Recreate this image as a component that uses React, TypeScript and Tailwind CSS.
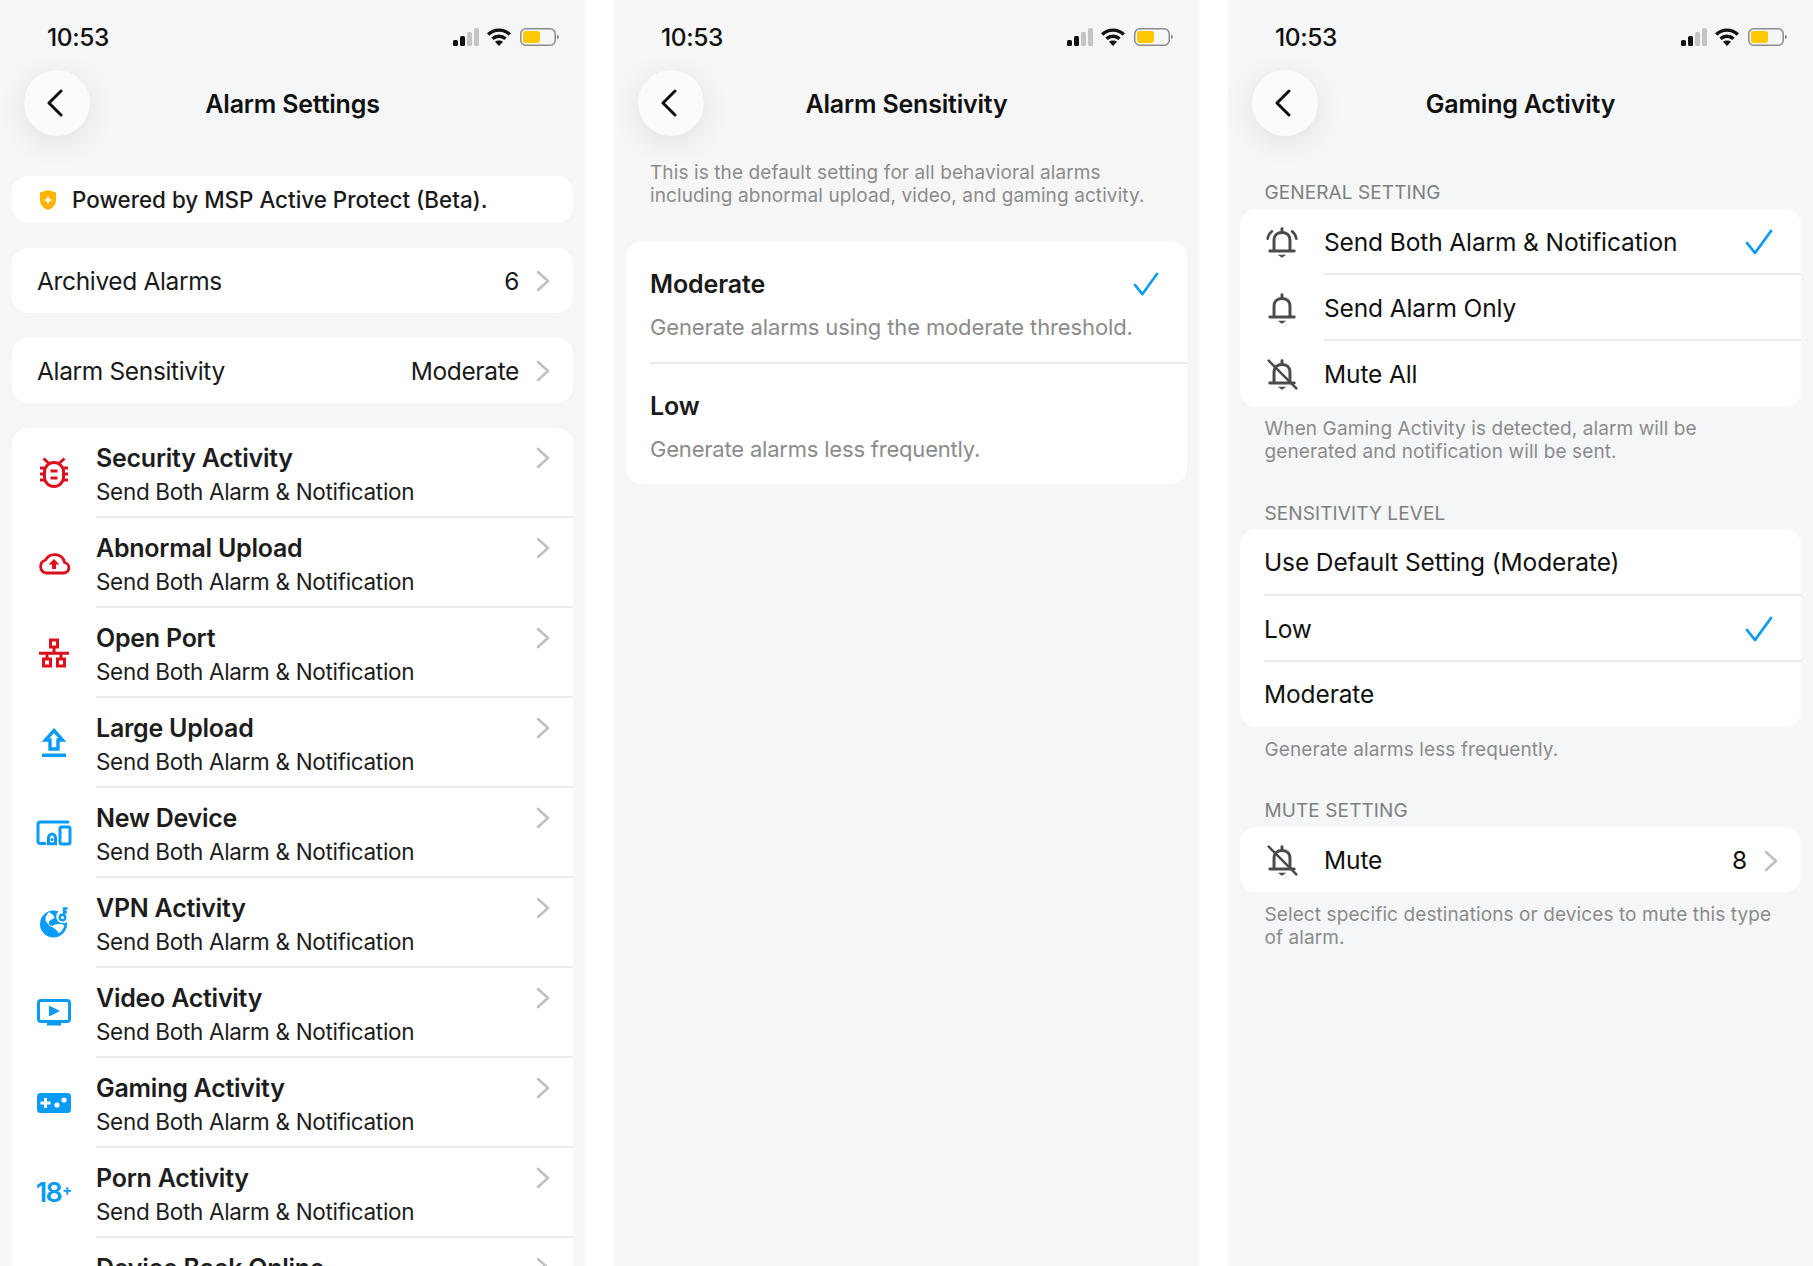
import React from "react";

const sub = "Send Both Alarm & Notification";

function Chevron({ className = "" }: { className?: string }) {
  return (
    <svg viewBox="0 0 14 22" className={`h-[22px] w-[14px] ${className}`} fill="none" stroke="#bfc0c2" strokeWidth="2.600" strokeLinecap="round" strokeLinejoin="round">
      <path d="M2 2l10 9-10 9" />
    </svg>
  );
}

function Check({ w = 28, h = 26 }: { w?: number; h?: number }) {
  return (
    <svg viewBox="0 0 28 26" width={w} height={h} fill="none" stroke="#0a9bf0" strokeWidth="2.800" strokeLinecap="round" strokeLinejoin="round">
      <path d="M2 14l8 10L26 2" />
    </svg>
  );
}

function StatusBar() {
  return (
    <div className="flex h-[70px] items-start justify-between pl-[47px] pr-[26px] pt-[18px]">
      <span className="text-[24.500px] font-medium leading-[38px] tracking-[-0.4px] text-[#111]">10:53</span>
      <div className="flex items-center gap-[8px] pt-[10px]">
        <svg viewBox="0 0 26 18" className="h-[18px] w-[26px]">
          <rect x="0" y="12" width="5" height="6" rx="1.500" fill="#111" />
          <rect x="7" y="8" width="5" height="10" rx="1.500" fill="#111" />
          <rect x="14" y="4" width="5" height="14" rx="1.500" fill="#c4c4c4" />
          <rect x="21" y="0" width="5" height="18" rx="1.500" fill="#c4c4c4" />
        </svg>
        <svg viewBox="0 0 24 18" className="h-[18px] w-[24px]" fill="none" stroke="#111" strokeWidth="3.400">
          <path d="M1.200 6.500c6-5.800 15.600-5.800 21.600 0" />
          <path d="M5.500 10.800c3.700-3.400 9.300-3.400 13 0" />
          <path d="M12 18l-4-4.200c2.200-1.900 5.800-1.900 8 0z" fill="#111" stroke="none" />
        </svg>
        <svg viewBox="0 0 39 18" className="ml-[1px] h-[18px] w-[39px]">
          <rect x="0.750" y="0.750" width="34.500" height="16.500" rx="5" fill="none" stroke="#8c8c8c" strokeWidth="1.500" />
          <rect x="3" y="3" width="17" height="12" rx="3" fill="#ffc800" />
          <path d="M37 7v4c1.200-.3 2-1 2-2s-.8-1.700-2-2z" fill="#8c8c8c" />
        </svg>
      </div>
    </div>
  );
}

function Header({ title }: { title: string }) {
  return (
    <div className="grid h-[66px] grid-cols-[1fr_auto_1fr] items-center">
      <div className="pl-[24px]">
        <div className="flex h-[66px] w-[66px] items-center justify-center rounded-full bg-[#fbfbfb] shadow-[0_6px_30px_rgba(0,0,0,0.09)]">
          <svg viewBox="0 0 18 28" className="mr-[4px] h-[28px] w-[18px]" fill="none" stroke="#111" strokeWidth="3" strokeLinecap="round" strokeLinejoin="round">
            <path d="M15 2L3 14l12 12" />
          </svg>
        </div>
      </div>
      <div className="pt-[4px] text-[25px] font-semibold tracking-[-0.2px] text-[#111]">{title}</div>
      <div />
    </div>
  );
}

function Ico({ children }: { children: React.ReactNode }) {
  return <svg viewBox="0 0 36 36" className="h-[36px] w-[36px]" fill="none">{children}</svg>;
}

const red = "#dd0f1c";
const blue = "#0a9bf5";

const BugIcon = () => (
  <Ico>
    <g stroke={red} strokeWidth="3">
      <rect x="8.500" y="7.500" width="19" height="24" rx="9.500" />
      <path d="M12.500 8L7.500 3.500M23.500 8l5-4.500M4 13h4.500M4 19h4.500M4 25h4.500M27.500 13H32M27.500 19H32M27.500 25H32M14.500 16h7M14.500 23h7" />
    </g>
  </Ico>
);
const CloudIcon = () => (
  <Ico>
    <path d="M10 28h17.500a5.300 5.300 0 0 0 1.100-10.500A10.300 10.300 0 0 0 9.500 15 6.700 6.700 0 0 0 10 28z" stroke={red} strokeWidth="2.800" />
    <path d="M18 14l5.500 5.500h-3.500v4.500h-4v-4.500h-3.500z" fill={red} />
  </Ico>
);
const NetIcon = () => (
  <Ico>
    <g stroke={red} strokeWidth="3">
      <rect x="14.500" y="5" width="7" height="7" />
      <path d="M18 12v6M3 18.300h30M11 18v6M25 18v6" />
      <rect x="7.500" y="24" width="7" height="7" />
      <rect x="21.500" y="24" width="7" height="7" />
    </g>
  </Ico>
);
const UpIcon = () => (
  <Ico>
    <path d="M18 5.500L26.500 15H22v9h-8v-9H9.500z" stroke={blue} strokeWidth="3.400" strokeLinejoin="miter" />
    <rect x="6" y="28.500" width="24" height="3.500" fill={blue} />
  </Ico>
);
const DeviceIcon = () => (
  <Ico>
    <g stroke={blue} strokeWidth="3">
      <path d="M32 7H4a2 2 0 0 0-2 2v18a2 2 0 0 0 1.500 1.500H9" strokeLinecap="round" />
      <rect x="24" y="12" width="10" height="17" rx="1.500" />
      <path d="M16 19c-1.500 0-3.500 1.600-3.500 3.800v6h7v-6c0-2.200-2-3.800-3.500-3.800z" />
    </g>
    <circle cx="16" cy="24.500" r="1.500" fill={blue} />
  </Ico>
);
const GlobeIcon = () => (
  <Ico>
    <circle cx="17.500" cy="19" r="13.500" fill={blue} />
    <path d="M13 7c2.500 2 5 3 5.500 5.500-1.500 2.200-4.500 1.800-5.500 4.500-.5 2 1 3.500 3 4 3-2 8-3 12.500-.5-1 3.500-3 6.200-6 7.800-1-2.500-3-3.500-5-5.500-3-1-5-3-8-7-.5-3 1-6.500 3.500-8.800z" fill="#fff" />
    <circle cx="27" cy="11.500" r="6.800" fill="#fff" />
    <circle cx="26.500" cy="12.500" r="2.700" stroke={blue} strokeWidth="2.400" />
    <path d="M28 10V3.500h3.500M28 7h3" stroke={blue} strokeWidth="2.400" />
  </Ico>
);
const VideoIcon = () => (
  <Ico>
    <rect x="2.500" y="5.500" width="31" height="21" rx="2.500" stroke={blue} strokeWidth="3" />
    <rect x="11" y="27" width="14" height="3.500" fill={blue} />
    <path d="M13 10.500l11 5.500-11 5.500z" fill={blue} />
  </Ico>
);
const GameIcon = () => (
  <Ico>
    <rect x="1" y="8" width="34" height="20" rx="3.500" fill={blue} />
    <path d="M9.500 13v10M4.500 18h10" stroke="#fff" strokeWidth="3" />
    <circle cx="21" cy="20" r="2.600" fill="#fff" />
    <circle cx="28" cy="15" r="2.600" fill="#fff" />
  </Ico>
);
const PornIcon = () => (
  <span className="flex h-[36px] w-[36px] items-start justify-center pt-[4px] text-[27px] font-semibold leading-[28px] tracking-[-1.8px] text-[#0a9bf5]">
    18<span className="ml-[1px] mt-[3px] text-[15px] font-bold leading-[15px] tracking-normal">+</span>
  </span>
);

function Bell({ ring = false, mute = false }: { ring?: boolean; mute?: boolean }) {
  return (
    <svg viewBox="0 0 32 32" className="h-[34px] w-[34px]" fill="none" stroke="#4b4b4b" strokeWidth="2.800" strokeLinecap="round">
      <path d="M8.500 24V14.500C8.500 9.500 12 7 16 7s7.500 2.500 7.500 7.500V24" />
      <path d="M4.500 24.500h23" />
      <path d="M16 3.500V6" />
      <path d="M13.500 28.500h5l-2.500 1.800z" fill="#4b4b4b" strokeWidth="1" />
      {ring && <path d="M2.500 13c.3-3 1.700-5.300 4-7M29.500 13c-.3-3-1.700-5.300-4-7" strokeWidth="2.400" />}
      {mute && <path d="M3.500 3.500l26 26" stroke="#4b4b4b" strokeWidth="2.400" />}
    </svg>
  );
}

const rows: [string, React.ComponentType][] = [
  ["Security Activity", BugIcon],
  ["Abnormal Upload", CloudIcon],
  ["Open Port", NetIcon],
  ["Large Upload", UpIcon],
  ["New Device", DeviceIcon],
  ["VPN Activity", GlobeIcon],
  ["Video Activity", VideoIcon],
  ["Gaming Activity", GameIcon],
  ["Porn Activity", PornIcon],
];

function Simple({ label, value }: { label: string; value: string }) {
  return (
    <div className="mx-[12px] mt-[25px] flex h-[65px] items-center justify-between rounded-[16px] bg-white pl-[25px] pr-[23px] text-[24.500px] tracking-[-0.35px] text-[#1a1a1a]">
      <span className="pt-[2px]">{label}</span>
      <span className="flex items-center gap-[17px]">
        <span className="pt-[2px]">{value}</span>
        <Chevron />
      </span>
    </div>
  );
}

function AlarmRow({ title, Icon, last }: { title: string; Icon?: React.ComponentType; last?: boolean }) {
  return (
    <div className="flex h-[90px]">
      <div className="flex w-[84px] shrink-0 items-center justify-center">{Icon && <Icon />}</div>
      <div className={`relative flex-1 pt-[12px] ${last ? "" : "border-b-2 border-[#e9ebf1]"}`}>
        <div className="flex items-start justify-between pr-[23px]">
          <span className="text-[25px] font-semibold leading-[36px] tracking-[-0.25px] text-[#1d1d1d]">{title}</span>
          <Chevron className="mt-[7px]" />
        </div>
        <div className="text-[22.500px] leading-[32px] tracking-[-0.32px] text-[#1d1d1d]">{sub}</div>
      </div>
    </div>
  );
}

function Panel1() {
  return (
    <div className="h-[1266px] w-[585px] shrink-0 overflow-hidden bg-[#f5f6f8]">
      <StatusBar />
      <Header title="Alarm Settings" />
      <div className="mx-[12px] mt-[40px] flex h-[47px] items-center gap-[16px] rounded-[16px] bg-white pl-[28px]">
        <svg viewBox="0 0 16 20" className="h-[20px] w-[16px]">
          <path d="M8 0l8 2.500V10c0 5-3.500 8.500-8 10-4.500-1.500-8-5-8-10V2.500z" fill="#ffb400" />
          <path d="M8 5.500l1.300 3.200 3.200 1.300-3.200 1.300L8 14.500l-1.300-3.200L3.500 10l3.200-1.300z" fill="#fff" />
        </svg>
        <span className="text-[22.400px] font-medium text-[#1a1a1a]">Powered by MSP Active Protect (Beta).</span>
      </div>
      <Simple label="Archived Alarms" value="6" />
      <Simple label="Alarm Sensitivity" value="Moderate" />
      <div className="mx-[12px] mt-[25px] rounded-t-[16px] bg-white">
        {rows.map(([t, I]) => (
          <AlarmRow key={t} title={t} Icon={I} />
        ))}
        <AlarmRow title="Device Back Online" last />
      </div>
    </div>
  );
}

function Panel2() {
  return (
    <div className="h-[1266px] w-[585px] shrink-0 overflow-hidden bg-[#f6f6f7]">
      <StatusBar />
      <Header title="Alarm Sensitivity" />
      <p className="pl-[36px] pt-[25px] text-[19px] leading-[23px] tracking-[0.1px] text-[#8b8b8b]">
        This is the default setting for all behavioral alarms
        <br />
        including abnormal upload, video, and gaming activity.
      </p>
      <div className="mx-[12px] mt-[34px] rounded-[16px] bg-white">
        <div className="ml-[24px] h-[123px] border-b-2 border-[#e9ebf1] pr-[28px] pt-[25px]">
          <div className="flex items-center justify-between">
            <span className="text-[25px] font-semibold leading-[36px] tracking-[-0.1px] text-[#1a1a1a]">Moderate</span>
            <Check w={26} h={24} />
          </div>
          <div className="mt-[7px] text-[22px] leading-[36px] tracking-[-0.13px] text-[#8b8b8b]">Generate alarms using the moderate threshold.</div>
        </div>
        <div className="ml-[24px] h-[120px] pt-[24px]">
          <div className="text-[25px] font-semibold leading-[36px] tracking-[-0.1px] text-[#1a1a1a]">Low</div>
          <div className="mt-[7px] text-[22px] leading-[36px] tracking-[-0.2px] text-[#8b8b8b]">Generate alarms less frequently.</div>
        </div>
      </div>
    </div>
  );
}

function Label({ children, mt }: { children: string; mt: string }) {
  return <div className={`${mt} pl-[36.500px] text-[19px] leading-[24px] tracking-[0.1px] text-[#7f7f7f]`}>{children}</div>;
}
function Help({ children, mt }: { children: React.ReactNode; mt: string }) {
  return <p className={`${mt} pl-[36.500px] text-[19px] leading-[23px] tracking-[0.1px] text-[#8b8b8b]`}>{children}</p>;
}
function Row3({ icon, text, check, sep, h = "h-[66px]" }: { icon?: React.ReactNode; text: string; check?: boolean; sep?: boolean; h?: string }) {
  return (
    <div className={`flex ${h}`}>
      {icon && <div className="flex w-[84px] shrink-0 items-center justify-center">{icon}</div>}
      <div className={`flex flex-1 items-center justify-between pr-[28px] text-[24.500px] tracking-[-0.12px] text-[#111] ${icon ? "" : "ml-[24px]"} ${sep ? "border-b-2 border-[#e9ebf1] pt-[2px]" : ""}`}>
        <span>{text}</span>
        {check && <Check />}
      </div>
    </div>
  );
}

function Panel3() {
  return (
    <div className="h-[1266px] w-[585px] shrink-0 overflow-hidden bg-[#f5f6f8]">
      <StatusBar />
      <Header title="Gaming Activity" />
      <Label mt="mt-[45px]">GENERAL SETTING</Label>
      <div className="mx-[12px] mt-[4px] rounded-[16px] bg-white">
        <Row3 icon={<Bell ring />} text="Send Both Alarm & Notification" check sep />
        <Row3 icon={<Bell />} text="Send Alarm Only" sep />
        <Row3 icon={<Bell mute />} text="Mute All" />
      </div>
      <Help mt="mt-[10px]">
        When Gaming Activity is detected, alarm will be
        <br />
        generated and notification will be sent.
      </Help>
      <Label mt="mt-[39px]">SENSITIVITY LEVEL</Label>
      <div className="mx-[12px] mt-[3px] rounded-[16px] bg-white">
        <Row3 text="Use Default Setting (Moderate)" sep h="h-[67px]" />
        <Row3 text="Low" check sep />
        <Row3 text="Moderate" h="h-[65px]" />
      </div>
      <Help mt="mt-[11px]">Generate alarms less frequently.</Help>
      <Label mt="mt-[38px]">MUTE SETTING</Label>
      <div className="mx-[12px] mt-[4px] flex h-[65px] rounded-[16px] bg-white">
        <div className="flex w-[84px] shrink-0 items-center justify-center"><Bell mute /></div>
        <div className="flex flex-1 items-center justify-between pr-[23px] pt-[2px] text-[24.500px] tracking-[-0.12px] text-[#111]">
          <span>Mute</span>
          <span className="flex items-center gap-[17px]">
            <span>8</span>
            <Chevron />
          </span>
        </div>
      </div>
      <Help mt="mt-[11px]">
        Select specific destinations or devices to mute this type
        <br />
        of alarm.
      </Help>
    </div>
  );
}

export default function App() {
  return (
    <div className="flex h-[1266px] w-[1813px] gap-[29px] overflow-hidden bg-white font-['Inter',sans-serif]">
      <Panel1 />
      <Panel2 />
      <Panel3 />
    </div>
  );
}
